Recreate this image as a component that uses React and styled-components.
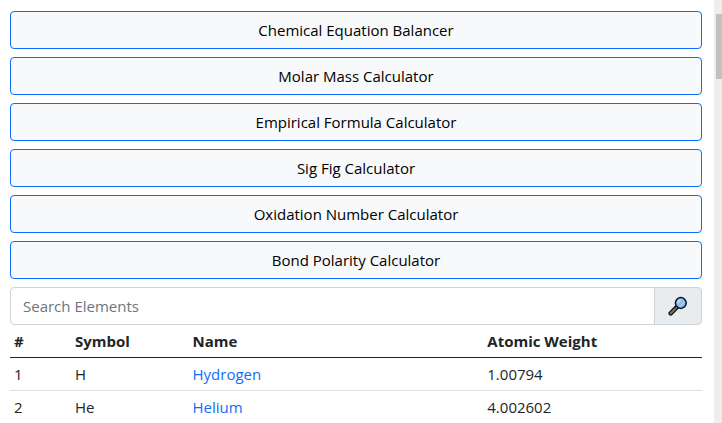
import React from "react";
import styled, { createGlobalStyle } from "styled-components";

const GlobalStyle = createGlobalStyle`
  *, *::before, *::after { box-sizing: border-box; }
  body {
    margin: 0;
    overflow: hidden;
    background: #fff;
    color: #212529;
    font-family: "Segoe UI", "Open Sans", "Noto Sans", sans-serif;
    font-size: 15px;
    line-height: 24px;
  }
`;

const Page = styled.div`
  display: flex;
  height: 100vh;
  overflow: hidden;
`;

const Content = styled.main`
  flex: 1;
  min-width: 0;
  padding: 11px 12px 0 10px;
`;

const ToolList = styled.nav`
  display: grid;
  gap: 8px;
  margin-bottom: 8px;
`;

const ToolButton = styled.button`
  width: 100%;
  padding: 6px 12px;
  border: 1px solid #0d6efd;
  border-radius: 4px;
  background: #f8f9fa;
  color: #000;
  font: inherit;
  text-align: center;
  cursor: pointer;
`;

const SearchGroup = styled.form`
  display: flex;
`;

const SearchInput = styled.input`
  flex: 1;
  min-width: 0;
  height: 38px;
  padding: 6px 12px;
  border: 1px solid #ced4da;
  border-radius: 4px 0 0 4px;
  background: #fff;
  color: #212529;
  font: inherit;

  &::placeholder {
    color: #6c757d;
    opacity: 1;
  }
`;

const SearchButton = styled.button`
  display: flex;
  align-items: center;
  justify-content: center;
  width: 48px;
  height: 38px;
  margin-left: -1px;
  padding: 0;
  border: 1px solid #ced4da;
  border-radius: 0 4px 4px 0;
  background: #e9ecef;
  cursor: pointer;
`;

const ElementTable = styled.table`
  width: 100%;
  table-layout: fixed;
  border-collapse: separate;
  border-spacing: 0;
`;

const HeadCell = styled.th`
  width: ${({ $width }) => $width};
  padding: 4px;
  border-bottom: 1px solid #212529;
  font-weight: 700;
  text-align: left;
`;

const Cell = styled.td`
  padding: 4px;
  border-bottom: 1px solid #dee2e6;
`;

const ElementLink = styled.a`
  color: #0d6efd;
  text-decoration: none;
`;

const ScrollTrack = styled.div`
  flex: none;
  width: 8px;
  padding: 14px 0 0 2px;
  background: #eee;
`;

const ScrollThumb = styled.div`
  height: 65px;
  background: #c1c1c1;
`;

const tools = [
  "Chemical Equation Balancer",
  "Molar Mass Calculator",
  "Empirical Formula Calculator",
  "Sig Fig Calculator",
  "Oxidation Number Calculator",
  "Bond Polarity Calculator",
];

const columns = [
  { label: "#", width: "8.8%" },
  { label: "Symbol", width: "17%" },
  { label: "Name", width: "42.6%" },
  { label: "Atomic Weight", width: "31.6%" },
];

const elements = [
  { number: 1, symbol: "H", name: "Hydrogen", weight: "1.00794" },
  { number: 2, symbol: "He", name: "Helium", weight: "4.002602" },
];

function MagnifierIcon() {
  return (
    <svg width="20" height="20" viewBox="0 0 20 20" aria-hidden="true">
      <path d="M2.7 17.3 8.8 11.2" stroke="#111" strokeWidth="4.6" strokeLinecap="round" />
      <path d="M2.8 17.2 7 13" stroke="#6f7477" strokeWidth="2.2" strokeLinecap="round" />
      <path d="M8 12 9.3 10.7" stroke="#b5babd" strokeWidth="1.4" />
      <circle cx="12.8" cy="7" r="5.4" fill="#83bff2" stroke="#111" strokeWidth="1.5" />
      <path d="M9.3 8.2 14 3.4A4 4 0 0 0 9.3 8.2Z" fill="#b9dcfa" />
      <path d="M11.2 10 16 5.2 16.6 6.6 12.6 10.6Z" fill="#a4d0f7" />
    </svg>
  );
}

export default function App() {
  return (
    <>
      <GlobalStyle />
      <Page>
        <Content>
          <ToolList aria-label="Calculators">
            {tools.map((tool) => (
              <ToolButton key={tool} type="button">{tool}</ToolButton>
            ))}
          </ToolList>
          <SearchGroup role="search" onSubmit={(event) => event.preventDefault()}>
            <SearchInput type="text" placeholder="Search Elements" aria-label="Search Elements" />
            <SearchButton type="submit" aria-label="Search">
              <MagnifierIcon />
            </SearchButton>
          </SearchGroup>
          <ElementTable>
            <thead>
              <tr>
                {columns.map(({ label, width }) => (
                  <HeadCell key={label} scope="col" $width={width}>{label}</HeadCell>
                ))}
              </tr>
            </thead>
            <tbody>
              {elements.map(({ number, symbol, name, weight }) => (
                <tr key={number}>
                  <Cell>{number}</Cell>
                  <Cell>{symbol}</Cell>
                  <Cell><ElementLink href={`#${name}`}>{name}</ElementLink></Cell>
                  <Cell>{weight}</Cell>
                </tr>
              ))}
            </tbody>
          </ElementTable>
        </Content>
        <ScrollTrack aria-hidden="true">
          <ScrollThumb />
        </ScrollTrack>
      </Page>
    </>
  );
}
